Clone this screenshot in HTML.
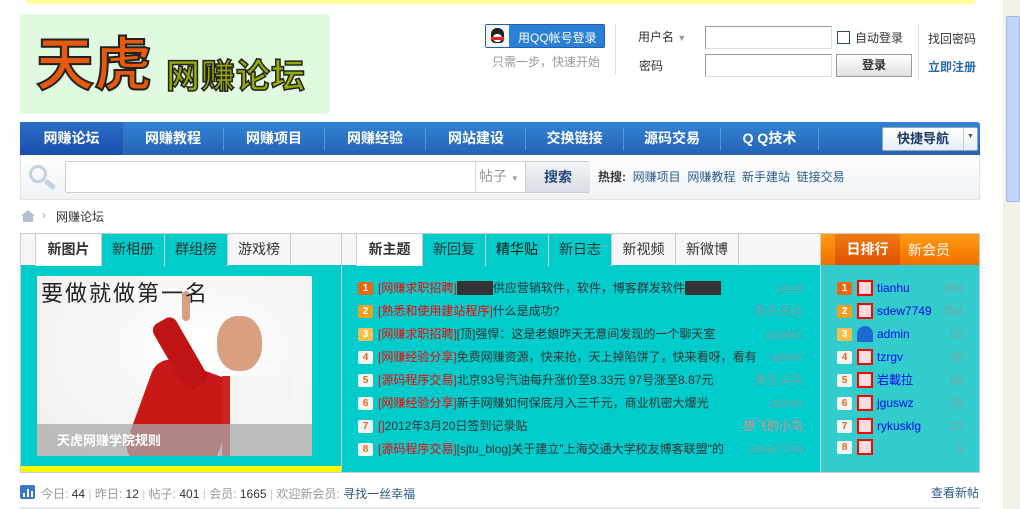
<!DOCTYPE html>
<html><head><meta charset="utf-8"><style>
*{margin:0;padding:0;box-sizing:border-box}
body{width:1020px;height:509px;overflow:hidden;background:#fff;font-family:"Liberation Sans","Noto Sans CJK SC",sans-serif;font-size:12px;color:#333;position:relative}
.a{position:absolute}
.nav a{position:absolute;top:0;height:33px;line-height:33px;color:#fff;font-weight:bold;font-size:14px;text-align:center;text-decoration:none}
.sep{position:absolute;top:6px;width:1px;height:22px;background:#5c95d6}
.tab{position:absolute;top:0;height:32px;line-height:30px;text-align:center;font-size:14px;border-right:1px solid #ccc}
.row{position:absolute;left:0;width:100%;height:20px;line-height:20px;white-space:nowrap}
.num{position:absolute;width:15px;height:13px;font-size:10px;line-height:13px;text-align:center;border-radius:2px;font-weight:bold}
.red{color:#f00}
.au{position:absolute;right:0;color:#7fa0a0}
.av{position:absolute;width:16px;height:16px;border:2px solid #f00;background:#fdd}
</style></head><body>
<div class="a" style="left:26px;top:0;width:950px;height:4px;background:#ffff99;border-radius:0 0 6px 6px"></div>
<div class="a" style="left:1003px;top:0;width:17px;height:509px;background:#f3f1ea"></div>
<div class="a" style="left:1006px;top:16px;width:14px;height:186px;background:#c2d6fb;border:1px solid #9ab8ee;border-radius:2px"></div>
<!-- logo -->
<div class="a" style="left:20px;top:14px;width:310px;height:100px;background:#e0fae0;border-radius:4px"></div>
<div class="a" style="left:36px;top:18px;font-size:58px;font-weight:bold;color:#e85a0a;-webkit-text-stroke:2px #222;font-family:'Noto Sans CJK SC',sans-serif;line-height:84px">天虎</div>
<div class="a" style="left:166px;top:48px;font-size:34px;font-weight:bold;color:#99aa00;-webkit-text-stroke:1.5px #222;font-family:'Noto Sans CJK SC',sans-serif;line-height:52px;letter-spacing:1px">网赚论坛</div>
<!-- qq -->
<div class="a" style="left:485px;top:24px;width:120px;height:24px;background:#2a7fd6;border:1px solid #1e62b0;border-radius:2px"></div>
<div class="a" style="left:486px;top:25px;width:23px;height:22px;background:#f4f4f4"></div>
<div class="a" style="left:491px;top:28px;width:13px;height:15px;background:#222;border-radius:6px 6px 4px 4px"></div>
<div class="a" style="left:493px;top:34px;width:9px;height:8px;background:#fff;border-radius:4px"></div>
<div class="a" style="left:491px;top:37px;width:13px;height:3px;background:#e22"></div>
<div class="a" style="left:518px;top:29px;color:#fff;font-size:12px">用QQ帐号登录</div>
<div class="a" style="left:492px;top:53px;color:#999">只需一步，快速开始</div>
<div class="a" style="left:615px;top:24px;width:1px;height:50px;background:#ddd"></div>
<div class="a" style="left:638px;top:28px">用户名 <span style="color:#999;font-size:9px">▼</span></div>
<div class="a" style="left:639px;top:57px">密码</div>
<div class="a" style="left:705px;top:26px;width:127px;height:23px;border:1px solid #999;border-color:#999 #ddd #ddd #999"></div>
<div class="a" style="left:705px;top:54px;width:127px;height:23px;border:1px solid #999;border-color:#999 #ddd #ddd #999"></div>
<div class="a" style="left:837px;top:31px;width:13px;height:13px;border:1px solid #2a4a6a"></div>
<div class="a" style="left:855px;top:29px">自动登录</div>
<div class="a" style="left:836px;top:54px;width:76px;height:23px;border:1px solid #999;background:linear-gradient(#fff,#e0e0e0);text-align:center;line-height:21px;font-weight:bold">登录</div>
<div class="a" style="left:918px;top:24px;width:1px;height:56px;background:#ddd"></div>
<div class="a" style="left:928px;top:30px">找回密码</div>
<div class="a" style="left:928px;top:58px;color:#2a6aaa;font-weight:bold">立即注册</div>
<!-- nav -->
<div class="a nav" style="left:20px;top:122px;width:960px;height:33px;background:linear-gradient(#3283d6,#2563b5);border-radius:3px 3px 0 0">
<a style="left:0;width:103px;background:linear-gradient(#2a6ec8,#1a4fae)">网赚论坛</a>
<a style="left:103px;width:100px">网赚教程</a><div class="sep" style="left:203px"></div>
<a style="left:204px;width:100px">网赚项目</a><div class="sep" style="left:304px"></div>
<a style="left:305px;width:100px">网赚经验</a><div class="sep" style="left:405px"></div>
<a style="left:406px;width:100px">网站建设</a><div class="sep" style="left:505px"></div>
<a style="left:506px;width:97px">交换链接</a><div class="sep" style="left:603px"></div>
<a style="left:604px;width:96px">源码交易</a><div class="sep" style="left:700px"></div>
<a style="left:701px;width:97px">Q Q技术</a><div class="sep" style="left:798px"></div>
<div class="a" style="left:862px;top:5px;width:96px;height:24px;background:linear-gradient(#fff,#e6eef8);border:1px solid #8aa;border-radius:2px"><span style="position:absolute;left:0;width:80px;text-align:center;line-height:22px;color:#1a3a6a;font-weight:bold;font-size:13px">快捷导航</span><span style="position:absolute;left:80px;top:0;width:1px;height:22px;background:#ccc"></span><span style="position:absolute;left:84px;top:5px;font-size:7px;color:#555">▼</span></div>
</div>
<!-- search -->
<div class="a" style="left:20px;top:155px;width:960px;height:45px;background:linear-gradient(#fff,#eef3f8);border:1px solid #dde4ea;border-top:none"></div>
<div class="a" style="left:29px;top:165px;width:18px;height:18px;border:3px solid #c2d2e2;border-radius:50%"></div>
<div class="a" style="left:44px;top:182px;width:12px;height:5px;background:#c2d2e2;transform:rotate(40deg);border-radius:2px"></div>
<div class="a" style="left:65px;top:161px;width:525px;height:32px;background:#fff;border:1px solid #c8ced4;border-radius:2px"></div>
<div class="a" style="left:475px;top:162px;width:1px;height:30px;background:#ddd"></div>
<div class="a" style="left:479px;top:166px;font-size:14px;color:#999">帖子 <span style="font-size:8px">▼</span></div>
<div class="a" style="left:525px;top:162px;width:65px;height:30px;background:linear-gradient(#f2f5f8,#d8dee4);border-left:1px solid #ccc;text-align:center;line-height:30px;color:#2a4a7a;font-weight:bold;font-size:14px">搜索</div>
<div class="a" style="left:598px;top:168px"><b style="color:#333">热搜:</b> <span style="color:#2a5a8a">&nbsp;网赚项目 &nbsp;网赚教程 &nbsp;新手建站 &nbsp;链接交易</span></div>
<!-- breadcrumb -->
<div class="a" style="left:21px;top:210px;width:0;height:0;border:7px solid transparent;border-bottom:6px solid #b0c0d4;border-top:0"></div>
<div class="a" style="left:23px;top:216px;width:10px;height:6px;background:#b0c0d4"></div>
<div class="a" style="left:42px;top:208px;color:#aaa">›</div>
<div class="a" style="left:56px;top:208px">网赚论坛</div>
<!-- main box -->
<div class="a" style="left:20px;top:233px;width:960px;height:240px;border:1px solid #ccc;background:#f6f6f6"></div>
<!-- left -->
<div class="a" style="left:21px;top:265px;width:320px;height:201px;background:#00cccc"></div>
<div class="a" style="left:21px;top:466px;width:320px;height:6px;background:#ffff00"></div>
<div class="a" style="left:21px;top:234px;width:320px;height:31px">
<div class="tab" style="left:0;width:15px;border-left:none"></div>
<div class="tab" style="left:15px;width:66px;background:#fff;font-weight:bold;height:32px">新图片</div>
<div class="tab" style="left:81px;width:63px;background:#00cccc;height:32px">新相册</div>
<div class="tab" style="left:144px;width:63px;background:#00cccc;height:32px">群组榜</div>
<div class="tab" style="left:207px;width:63px">游戏榜</div>
</div>
<div class="a" style="left:341px;top:233px;width:1px;height:240px;background:#ccc"></div>
<div class="a" style="left:37px;top:276px;width:275px;height:180px;background:radial-gradient(ellipse at 60% 40%,#fff 0,#f4f4f4 60%,#eee 100%);overflow:hidden">
<div class="a" style="left:100px;top:90px;width:90px;height:110px;background:#c81818;transform:rotate(20deg);border-radius:20px"></div>
<div class="a" style="left:130px;top:40px;width:26px;height:75px;background:#c01414;transform:rotate(-30deg);border-radius:8px"></div>
<div class="a" style="left:145px;top:15px;width:8px;height:30px;background:#d8a080;border-radius:4px"></div>
<div class="a" style="left:180px;top:40px;width:45px;height:55px;background:#d8a080;border-radius:45%"></div>
<div class="a" style="left:185px;top:100px;width:70px;height:80px;background:#f4f4f4;border-left:8px solid #c22"></div>
<div class="a" style="left:4px;top:0;font-size:22px;color:#222;letter-spacing:2px;font-family:'Noto Sans CJK SC',sans-serif">要做就做第一名</div>
<div class="a" style="left:0;top:148px;width:275px;height:32px;background:rgba(170,170,170,.75)"></div>
<div class="a" style="left:20px;top:154px;color:#fff;font-weight:bold;font-size:13px">天虎网赚学院规则</div>
</div>
<!-- mid -->
<div class="a" style="left:342px;top:265px;width:478px;height:207px;background:#00cccc"></div>
<div class="a" style="left:342px;top:234px;width:478px;height:31px">
<div class="tab" style="left:0;width:15px"></div>
<div class="tab" style="left:15px;width:66px;background:#fff;font-weight:bold;height:32px">新主题</div>
<div class="tab" style="left:81px;width:63px;background:#00cccc;height:32px">新回复</div>
<div class="tab" style="left:144px;width:63px;background:#00cccc;height:32px;color:#111">精华贴</div>
<div class="tab" style="left:207px;width:63px;background:#00cccc;height:32px">新日志</div>
<div class="tab" style="left:270px;width:64px">新视频</div>
<div class="tab" style="left:334px;width:63px">新微博</div>
</div>
<div class="a" style="left:358px;top:278px;width:445px;height:190px">
<div class="row" style="top:0"><span class="num" style="left:0;top:4px;background:#e86a10;color:#fff">1</span><span style="position:absolute;left:20px"><span class="red">[网赚求职招聘]</span><span style="background:#333;color:#333">■■■■■</span>供应营销软件，软件，博客群发软件<span style="background:#333;color:#333">■■■■■</span></span><span class="au">szvzl</span></div>
<div class="row" style="top:23px"><span class="num" style="left:0;top:4px;background:#f0a020;color:#fff">2</span><span style="position:absolute;left:20px"><span class="red">[熟悉和使用建站程序]</span>什么是成功?</span><span class="au">防孔尖兵</span></div>
<div class="row" style="top:46px"><span class="num" style="left:0;top:4px;background:#f5c050;color:#fff">3</span><span style="position:absolute;left:20px"><span class="red">[网赚求职招聘]</span>[顶]强悍：这是老娘昨天无意间发现的一个聊天室</span><span class="au">jguswz</span></div>
<div class="row" style="top:69px"><span class="num" style="left:0;top:4px;background:#f4f4f4;color:#e86a10">4</span><span style="position:absolute;left:20px"><span class="red">[网赚经验分享]</span>免费网赚资源，快来抢，天上掉陷饼了，快来看呀，看有</span><span class="au">admin</span></div>
<div class="row" style="top:92px"><span class="num" style="left:0;top:4px;background:#f4f4f4;color:#e86a10">5</span><span style="position:absolute;left:20px"><span class="red">[源码程序交易]</span>北京93号汽油每升涨价至8.33元 97号涨至8.87元</span><span class="au">防孔尖兵</span></div>
<div class="row" style="top:115px"><span class="num" style="left:0;top:4px;background:#f4f4f4;color:#e86a10">6</span><span style="position:absolute;left:20px"><span class="red">[网赚经验分享]</span>新手网赚如何保底月入三千元，商业机密大爆光</span><span class="au">admin</span></div>
<div class="row" style="top:138px"><span class="num" style="left:0;top:4px;background:#f4f4f4;color:#e86a10">7</span><span style="position:absolute;left:20px"><span class="red">[]</span>2012年3月20日签到记录贴</span><span class="au" style="color:#e88">想飞的小鸟</span></div>
<div class="row" style="top:161px"><span class="num" style="left:0;top:4px;background:#f4f4f4;color:#e86a10">8</span><span style="position:absolute;left:20px"><span class="red">[源码程序交易]</span>[sjtu_blog]关于建立"上海交通大学校友博客联盟"的</span><span class="au">sdew7749</span></div>
</div>
<!-- right -->
<div class="a" style="left:820px;top:233px;width:1px;height:240px;background:#ccc"></div>
<div class="a" style="left:821px;top:234px;width:158px;height:31px;background:linear-gradient(#ff9a10,#f07000)"></div>
<div class="a" style="left:835px;top:234px;width:65px;height:31px;background:linear-gradient(#f07a10,#e05000);color:#fff;font-weight:bold;font-size:14px;text-align:center;line-height:30px">日排行</div>
<div class="a" style="left:908px;top:240px;color:#fff;font-size:14px">新会员</div>
<div class="a" style="left:821px;top:265px;width:158px;height:207px;background:#33cccc"></div>
<div class="a" style="left:837px;top:278px;width:126px;height:190px;color:#0a0aee">
<div class="row" style="top:0"><span class="num" style="left:0;top:4px;background:#e86a10;color:#fff">1</span><span class="av" style="left:20px;top:2px"></span><span style="position:absolute;left:40px">tianhu</span><span class="au">354</span></div>
<div class="row" style="top:23px"><span class="num" style="left:0;top:4px;background:#f0a020;color:#fff">2</span><span class="av" style="left:20px;top:2px"></span><span style="position:absolute;left:40px">sdew7749</span><span class="au">254</span></div>
<div class="row" style="top:46px"><span class="num" style="left:0;top:4px;background:#f5c050;color:#fff">3</span><span class="av" style="left:20px;top:2px;border:none;background:#1a6ad0;border-radius:8px 8px 0 0"></span><span style="position:absolute;left:40px">admin</span><span class="au">52</span></div>
<div class="row" style="top:69px"><span class="num" style="left:0;top:4px;background:#f4f4f4;color:#e86a10">4</span><span class="av" style="left:20px;top:2px"></span><span style="position:absolute;left:40px">tzrgv</span><span class="au">30</span></div>
<div class="row" style="top:92px"><span class="num" style="left:0;top:4px;background:#f4f4f4;color:#e86a10">5</span><span class="av" style="left:20px;top:2px"></span><span style="position:absolute;left:40px">岩載拉</span><span class="au">26</span></div>
<div class="row" style="top:115px"><span class="num" style="left:0;top:4px;background:#f4f4f4;color:#e86a10">6</span><span class="av" style="left:20px;top:2px"></span><span style="position:absolute;left:40px">jguswz</span><span class="au">25</span></div>
<div class="row" style="top:138px"><span class="num" style="left:0;top:4px;background:#f4f4f4;color:#e86a10">7</span><span class="av" style="left:20px;top:2px"></span><span style="position:absolute;left:40px">rykusklg</span><span class="au">22</span></div>
<div class="row" style="top:161px"><span class="num" style="left:0;top:2px;background:#f4f4f4;color:#e86a10">8</span><span class="av" style="left:20px;top:0"></span><span class="au">5</span></div>
</div>
<!-- footer -->
<div class="a" style="left:20px;top:485px;width:15px;height:14px;background:#3a78c8;border-radius:2px"></div>
<div class="a" style="left:23px;top:493px;width:2px;height:4px;background:#fff"></div>
<div class="a" style="left:27px;top:489px;width:2px;height:8px;background:#fff"></div>
<div class="a" style="left:31px;top:491px;width:2px;height:6px;background:#fff"></div>
<div class="a" style="left:41px;top:485px;color:#999">今日: <span style="color:#333">44</span> <span style="color:#ccc">|</span> 昨日: <span style="color:#333">12</span> <span style="color:#ccc">|</span> 帖子: <span style="color:#333">401</span> <span style="color:#ccc">|</span> 会员: <span style="color:#333">1665</span> <span style="color:#ccc">|</span> 欢迎新会员: <span style="color:#2a5a8a">寻找一丝幸福</span></div>
<div class="a" style="left:931px;top:484px;color:#2a5a8a">查看新帖</div>
<div class="a" style="left:20px;top:507px;width:960px;height:2px;background:#dde4ea"></div>
</body></html>
